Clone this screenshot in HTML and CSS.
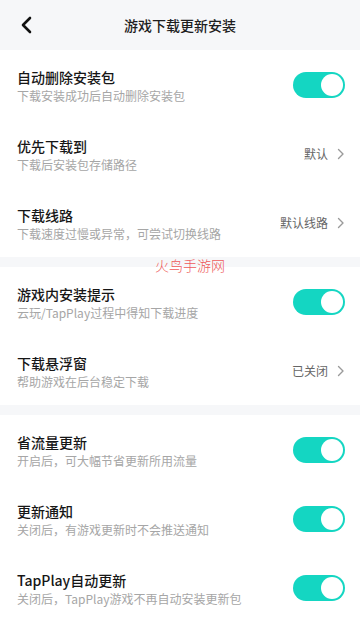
FILE: index.html
```html
<!DOCTYPE html>
<html lang="zh">
<head>
<meta charset="utf-8">
<link rel="stylesheet" href="styles.css">
</head>
<body>
<div class="page">
  <header class="topbar">
    <svg class="back" width="14" height="18" viewBox="0 0 14 18"><path d="M10 2 L3 9 L10 16" fill="none" stroke="#111" stroke-width="2.6" stroke-linecap="round" stroke-linejoin="round"/></svg>
    <h1 class="title">游戏下载更新安装</h1>
  </header>

  <section class="group">
    <div class="row">
      <div class="text"><div class="name">自动删除安装包</div><div class="desc">下载安装成功后自动删除安装包</div></div>
      <div class="switch"><span class="knob"></span></div>
    </div>
    <div class="row">
      <div class="text"><div class="name">优先下载到</div><div class="desc">下载后安装包存储路径</div></div>
      <div class="value">默认<svg class="chev" width="8" height="12" viewBox="0 0 8 12"><path d="M1.5 1.5 L6 6 L1.5 10.5" fill="none" stroke="#9a9a9a" stroke-width="1.4" stroke-linecap="round" stroke-linejoin="round"/></svg></div>
    </div>
    <div class="row">
      <div class="text"><div class="name">下载线路</div><div class="desc">下载速度过慢或异常，可尝试切换线路</div></div>
      <div class="value">默认线路<svg class="chev" width="8" height="12" viewBox="0 0 8 12"><path d="M1.5 1.5 L6 6 L1.5 10.5" fill="none" stroke="#9a9a9a" stroke-width="1.4" stroke-linecap="round" stroke-linejoin="round"/></svg></div>
    </div>
  </section>

  <section class="group">
    <div class="row">
      <div class="text"><div class="name">游戏内安装提示</div><div class="desc">云玩/TapPlay过程中得知下载进度</div></div>
      <div class="switch"><span class="knob"></span></div>
    </div>
    <div class="row">
      <div class="text"><div class="name">下载悬浮窗</div><div class="desc">帮助游戏在后台稳定下载</div></div>
      <div class="value">已关闭<svg class="chev" width="8" height="12" viewBox="0 0 8 12"><path d="M1.5 1.5 L6 6 L1.5 10.5" fill="none" stroke="#9a9a9a" stroke-width="1.4" stroke-linecap="round" stroke-linejoin="round"/></svg></div>
    </div>
  </section>

  <section class="group">
    <div class="row">
      <div class="text"><div class="name">省流量更新</div><div class="desc">开启后，可大幅节省更新所用流量</div></div>
      <div class="switch"><span class="knob"></span></div>
    </div>
    <div class="row">
      <div class="text"><div class="name">更新通知</div><div class="desc">关闭后，有游戏更新时不会推送通知</div></div>
      <div class="switch"><span class="knob"></span></div>
    </div>
    <div class="row">
      <div class="text"><div class="name">TapPlay自动更新</div><div class="desc">关闭后，TapPlay游戏不再自动安装更新包</div></div>
      <div class="switch"><span class="knob"></span></div>
    </div>
  </section>

  <div class="watermark">火鸟手游网</div>
</div>
</body>
</html>
```

FILE: styles.css
```css
* { box-sizing: border-box; margin: 0; padding: 0; }
html, body { width: 360px; height: 617px; overflow: hidden; }
body {
  background: #f6f7f9;
  font-family: "Noto Sans CJK SC", "Noto Sans", sans-serif;
  color: #1c1c1c;
}
.page { position: relative; width: 360px; }
.topbar {
  height: 50px;
  display: flex;
  align-items: center;
  justify-content: center;
  position: relative;
  background: #f6f7f9;
}
.back { position: absolute; left: 20px; top: 16px; }
.title { font-size: 14px; font-weight: 500; color: #1e1e1e; letter-spacing: 0; }
.group { background: #fff; margin-bottom: 10px; }
.row {
  height: 69px;
  display: flex;
  justify-content: space-between;
  align-items: center;
  padding: 0 15px 0 17px;
}
.text { align-self: flex-start; padding-top: 17px; }
.name { font-size: 14px; line-height: 20px; font-weight: 500; color: #161616; }
.desc { font-size: 12px; line-height: 18px; color: #a6a6a6; }
.switch {
  width: 52px; height: 26px;
  border-radius: 13px;
  background: #14d6c2;
  position: relative;
}
.knob {
  position: absolute; right: 2px; top: 2px;
  width: 22px; height: 22px; border-radius: 50%;
  background: #fff;
}
.value {
  display: flex; align-items: center; gap: 9px;
  font-size: 12px; color: #666;
}
.chev { display: block; }
.watermark {
  position: absolute; left: 155px; top: 256px;
  font-size: 14px; line-height: 18px; color: #ee5a5a;
  font-weight: 300;
}
```
